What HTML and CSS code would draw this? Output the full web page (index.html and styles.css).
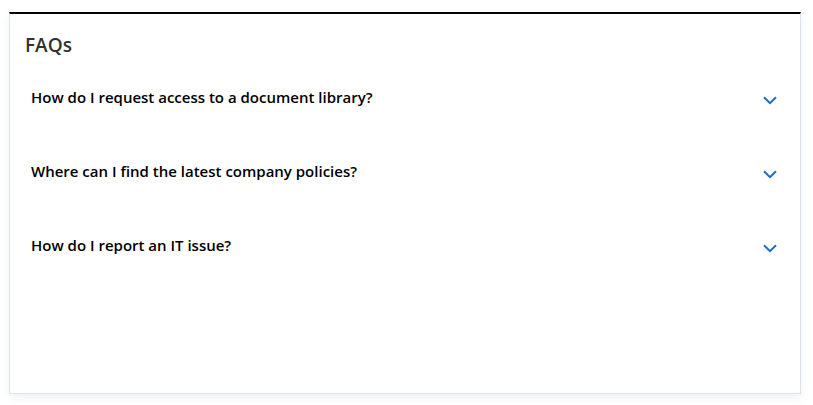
FILE: index.html
```html
<!DOCTYPE html>
<html lang="en">
<head>
    <meta charset="UTF-8">
    <meta name="viewport" content="width=device-width, initial-scale=1.0">
    <title>FAQs</title>
    <link rel="stylesheet" href="styles.css">
</head>
<body>
    <section class="faq-card">
        <h2 class="faq-title">FAQs</h2>
        <ul class="faq-list">
            <li class="faq-item">
                <button class="faq-question">
                    <span>How do I request access to a document library?</span>
                    <svg class="chevron" width="14" height="9" viewBox="0 0 14 9"><path d="M1 1.2l6 6 6-6" fill="none" stroke="currentColor" stroke-width="2"/></svg>
                </button>
            </li>
            <li class="faq-item">
                <button class="faq-question">
                    <span>Where can I find the latest company policies?</span>
                    <svg class="chevron" width="14" height="9" viewBox="0 0 14 9"><path d="M1 1.2l6 6 6-6" fill="none" stroke="currentColor" stroke-width="2"/></svg>
                </button>
            </li>
            <li class="faq-item">
                <button class="faq-question">
                    <span>How do I report an IT issue?</span>
                    <svg class="chevron" width="14" height="9" viewBox="0 0 14 9"><path d="M1 1.2l6 6 6-6" fill="none" stroke="currentColor" stroke-width="2"/></svg>
                </button>
            </li>
        </ul>
    </section>
</body>
</html>
```

FILE: styles.css
```css
body {
    font-family: "Open Sans", "Noto Sans", sans-serif;
    background-color: #fff;
    color: #242424;
    margin: 0;
    padding: 12px 12px 11px 9px;
}

.faq-card {
    height: 382px;
    box-sizing: border-box;
    background: white;
    border: 1px solid #dde3ea;
    border-top: 2px solid #000;
    box-shadow: 0 4px 10px rgba(0, 0, 0, 0.06);
    padding: 19px 23px 0 15px;
}

.faq-title {
    margin: 0;
    font-size: 19px;
    font-weight: 600;
    color: #323130;
    line-height: 24px;
}

.faq-list {
    list-style: none;
    margin: 30px 0 0;
    padding: 0;
}

.faq-item {
    height: 74px;
}

.faq-question {
    width: 100%;
    display: flex;
    align-items: center;
    justify-content: space-between;
    background: none;
    border: none;
    padding: 0 0 0 6px;
    font-family: inherit;
    font-size: 15px;
    font-weight: 600;
    color: #000;
    cursor: pointer;
    text-align: left;
    line-height: 20px;
}

.chevron {
    color: #1b6ec2;
    margin-top: 6px;
}
```
